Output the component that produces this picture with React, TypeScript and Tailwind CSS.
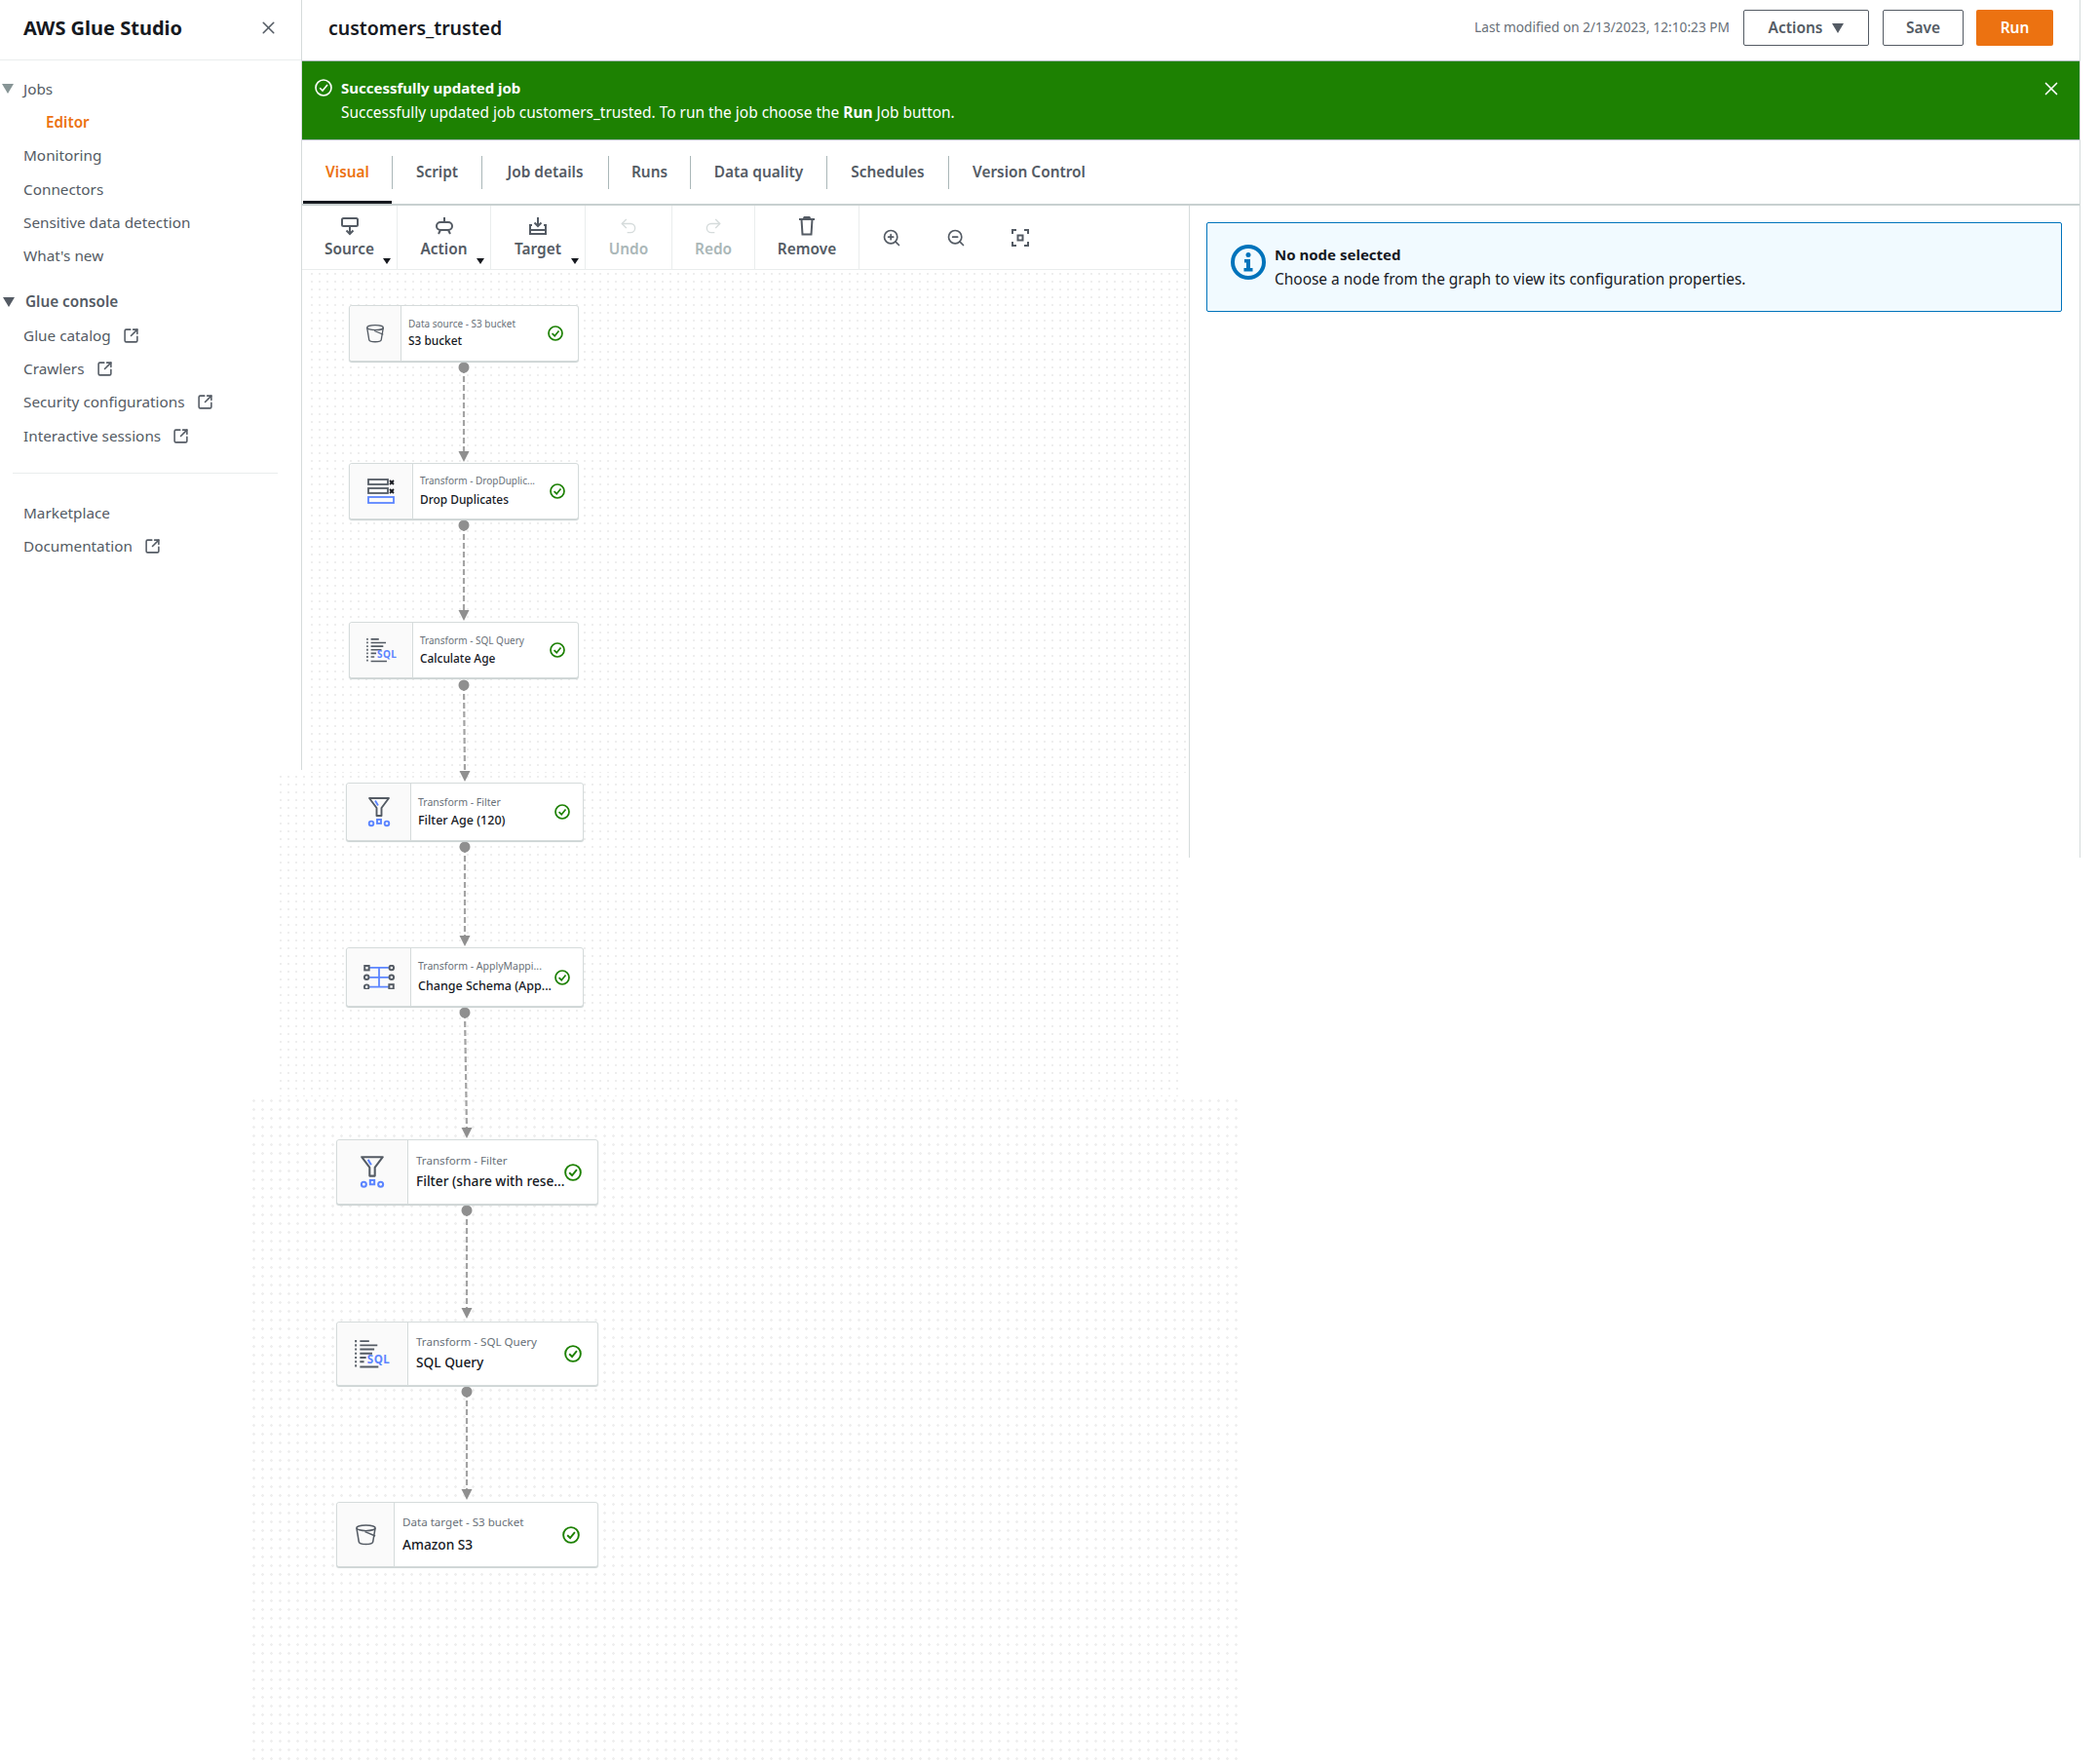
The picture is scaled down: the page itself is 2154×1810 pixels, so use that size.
import React from "react";
import { X, Undo2, Redo2, ZoomIn, ZoomOut, SquareArrowOutUpRight } from "lucide-react";

const PX = 310;
const PY = 277;

function Triangle({ color }: { color: string }) {
  return (
    <svg width="12" height="10" viewBox="0 0 12 10" className="shrink-0">
      <polygon points="0,0 12,0 6,10" fill={color} />
    </svg>
  );
}

function NavItem({ label, ext, active }: { label: string; ext?: boolean; active?: boolean }) {
  return (
    <div className={`flex h-[34.3px] items-center text-[15.3px] ${active ? "pl-[47px] font-semibold text-[#ec7211]" : "pl-[24px] text-[#545b64]"}`}>
      <span>{label}</span>
      {ext && <SquareArrowOutUpRight size={17} strokeWidth={2.2} className="ml-[12px] text-[#545b64]" />}
    </div>
  );
}

function Sidebar() {
  return (
    <aside className="h-[790px] w-[310px] shrink-0 border-r border-[#d5dbdb]">
      <div className="flex h-[62px] items-center justify-between border-b border-[#eaeded] pb-[4px] pl-[24px] pr-[23px]">
        <span className="text-[20px] font-bold text-[#16191f]">AWS Glue Studio</span>
        <X size={21} strokeWidth={1.8} className="text-[#545b64]" />
      </div>
      <div className="pt-[12px]">
        <div className="flex h-[34.3px] items-center gap-[10px] pl-[2px] text-[15.3px] text-[#545b64]">
          <Triangle color="#879596" />
          <span>Jobs</span>
        </div>
        <NavItem label="Editor" active />
        <NavItem label="Monitoring" />
        <NavItem label="Connectors" />
        <NavItem label="Sensitive data detection" />
        <NavItem label="What's new" />
        <div className="mt-[13px] flex h-[34.3px] items-center gap-[11px] pl-[3px] text-[15.3px] font-semibold text-[#545b64]">
          <Triangle color="#545b64" />
          <span>Glue console</span>
        </div>
        <NavItem label="Glue catalog" ext />
        <NavItem label="Crawlers" ext />
        <NavItem label="Security configurations" ext />
        <NavItem label="Interactive sessions" ext />
        <div className="ml-[13px] mr-[24px] mt-[21px] border-t border-[#eaeded]" />
        <div className="mt-[23px]">
          <NavItem label="Marketplace" />
          <NavItem label="Documentation" ext />
        </div>
      </div>
    </aside>
  );
}

function Header() {
  return (
    <header className="flex h-[62px] items-center pb-[5px] pl-[27px] pr-[27px]">
      <h1 className="text-[19.5px] font-semibold text-[#16191f]">customers_trusted</h1>
      <span className="ml-auto text-[13.7px] text-[#687078]">Last modified on 2/13/2023, 12:10:23 PM</span>
      <button className="ml-[14px] flex h-[37px] w-[129px] items-center justify-center gap-[10px] rounded-[2px] border border-[#545b64] text-[15.5px] font-semibold text-[#545b64]">
        Actions
        <svg width="12" height="10" viewBox="0 0 12 10"><polygon points="0,0 12,0 6,10" fill="#545b64" /></svg>
      </button>
      <button className="ml-[14px] h-[37px] w-[83px] rounded-[2px] border border-[#545b64] text-[15.5px] font-semibold text-[#545b64]">Save</button>
      <button className="ml-[13px] h-[37px] w-[79px] rounded-[2px] bg-[#ec7211] text-[15.5px] font-semibold text-white">Run</button>
    </header>
  );
}

function Banner() {
  return (
    <div className="flex h-[82px] items-start border-y border-[#aab7b8] bg-[#1d8102] pl-[13px] pr-[18px] pt-[15px] text-white">
      <svg width="18" height="18" viewBox="0 0 18 18" fill="none" stroke="white" strokeWidth="1.6" className="mt-[3px] shrink-0">
        <circle cx="9" cy="9" r="8" />
        <path d="M5.2 9.2 8 12l5-6" />
      </svg>
      <div className="ml-[9px] flex-1 text-[15.45px] leading-[25px]">
        <div className="text-[15px] font-bold">Successfully updated job</div>
        <div>
          Successfully updated job customers_trusted. To run the job choose the <span className="font-bold">Run</span> Job button.
        </div>
      </div>
      <X size={22} strokeWidth={1.8} className="mt-[2px]" />
    </div>
  );
}

const tabs: [string, string][] = [
  ["Visual", "w-[92px]"],
  ["Script", "w-[92px]"],
  ["Job details", "w-[130px]"],
  ["Runs", "w-[84px]"],
  ["Data quality", "w-[140px]"],
  ["Schedules", "w-[125px]"],
  ["Version Control", "w-[164px]"],
];

function Tabs() {
  return (
    <div className="flex h-[67px] items-stretch border-b-2 border-[#c8d0d0] pl-[1px]">
      {tabs.map(([t, w], i) => (
        <div key={t} className={`${w} relative flex items-center`}>
          <div className={`flex h-[34px] w-full items-center justify-center text-[15.4px] font-semibold ${i === 0 ? "text-[#ec7211]" : "text-[#545b64]"} ${i < tabs.length - 1 ? "border-r border-[#aab7b8]" : ""}`}>
            {t}
          </div>
          {i === 0 && <div className="absolute bottom-0 left-0 right-[1px] h-[3px] bg-[#16191f]" />}
        </div>
      ))}
    </div>
  );
}

const iconProps = { width: 20, height: 20, viewBox: "0 0 20 20", fill: "none", stroke: "#545b64", strokeWidth: 2 };

function SourceIcon() {
  return (
    <svg {...iconProps}>
      <rect x="2" y="2" width="16" height="8" rx="1.500" />
      <path d="M10 10v8M6.500 14.500 10 18l3.500-3.500" />
    </svg>
  );
}
function ActionIcon() {
  return (
    <svg {...iconProps}>
      <rect x="2" y="6" width="16" height="8" rx="4" />
      <path d="M10 1v5M6 14l-2 4M14 14l2 4" />
    </svg>
  );
}
function TargetIcon() {
  return (
    <svg {...iconProps}>
      <path d="M10 1v9M6.500 6.500 10 10l3.500-3.500" />
      <path d="M4 9H2v9h16V9h-2M2 14h16" />
    </svg>
  );
}
function FitIcon() {
  return (
    <svg {...iconProps}>
      <path d="M2 6V2h4M14 2h4v4M18 14v4h-4M6 18H2v-4" />
      <rect x="7.500" y="7.500" width="5" height="5" />
    </svg>
  );
}
function TrashIcon() {
  return (
    <svg {...iconProps}>
      <path d="M2 3h16M6.500 3l1-2h5l1 2M4.500 3l1 15.500h9l1-15.500" />
    </svg>
  );
}

function ToolItem({ label, w, icon, caret, disabled }: { label: string; w: string; icon: React.ReactNode; caret?: boolean; disabled?: boolean }) {
  return (
    <div className={`${w} relative flex flex-col items-center border-r border-[#eaeded] pt-[11px]`}>
      <div className="flex h-[20px] items-center justify-center">{icon}</div>
      <span className={`mt-[2px] text-[15.4px] font-semibold leading-[24px] ${disabled ? "text-[#aab7b8]" : "text-[#545b64]"}`}>{label}</span>
      {caret && (
        <svg width="8" height="6" viewBox="0 0 8 6" className="absolute bottom-[5px] right-[6px]">
          <polygon points="0,0 8,0 4,6" fill="#16191f" />
        </svg>
      )}
    </div>
  );
}

function Toolbar() {
  return (
    <div className="relative z-10 flex h-[66px] shrink-0 border-b border-[#eaeded] bg-white">
      <ToolItem label="Source" w="w-[98px]" icon={<SourceIcon />} caret />
      <ToolItem label="Action" w="w-[96px]" icon={<ActionIcon />} caret />
      <ToolItem label="Target" w="w-[97px]" icon={<TargetIcon />} caret />
      <ToolItem label="Undo" w="w-[89px]" icon={<Undo2 size={20} strokeWidth={1.6} className="text-[#d5dbdb]" />} disabled />
      <ToolItem label="Redo" w="w-[85px]" icon={<Redo2 size={20} strokeWidth={1.6} className="text-[#d5dbdb]" />} disabled />
      <ToolItem label="Remove" w="w-[107px]" icon={<TrashIcon />} />
      {[<ZoomIn key="a" size={20} strokeWidth={2} />, <ZoomOut key="b" size={20} strokeWidth={2} />, <FitIcon key="c" />].map((ic, i) => (
        <div key={i} className="flex h-full w-[66px] items-center justify-center text-[#545b64]">{ic}</div>
      ))}
    </div>
  );
}

function Bucket({ s }: { s: number }) {
  return (
    <svg width={s} height={s} viewBox="0 0 24 24" fill="none" stroke="#545b64" strokeWidth="1.600">
      <ellipse cx="12" cy="5" rx="10" ry="3" />
      <path d="M2 5l2.500 15c.3 1.600 3.500 2.500 7.500 2.500s7.200-.9 7.500-2.500L22 5" />
      <path d="M11 9l11 4.500" />
    </svg>
  );
}

function Dedupe({ s }: { s: number }) {
  return (
    <svg width={s} height={s} viewBox="0 0 28 26" fill="none" strokeWidth="1.800">
      <rect x="1" y="1" width="20" height="5" stroke="#545b64" />
      <rect x="1" y="10" width="20" height="5" stroke="#545b64" />
      <rect x="1" y="19" width="26" height="6" stroke="#5c85ff" />
      <path d="M23 2l4 4M27 2l-4 4M23 11l4 4M27 11l-4 4" stroke="#16191f" />
    </svg>
  );
}

function Sql({ s }: { s: number }) {
  return (
    <svg width={s} height={s * 0.85} viewBox="0 0 34 29" fill="none" stroke="#545b64" strokeWidth="1.800">
      <path d="M1 1v27" strokeDasharray="2 2" />
      <path d="M5 2h9M5 6h17M5 10h14M5 14h12M5 18h6M5 22h4M5 27h18" />
      <text x="12" y="23.500" fontSize="11" fontWeight="700" letterSpacing="0.5" fill="#5c85ff" stroke="none" fontFamily="'Noto Sans', sans-serif">SQL</text>
    </svg>
  );
}

function Funnel({ s }: { s: number }) {
  return (
    <svg width={s} height={s * 1.33} viewBox="0 0 24 32" fill="none" stroke="#545b64" strokeWidth="1.900">
      <path d="M2 2h20l-7.500 10v8h-5v-8z" strokeLinejoin="round" />
      <path d="M8 4.500l3 5" stroke="#5c85ff" />
      <circle cx="4" cy="28" r="2.300" stroke="#5c85ff" />
      <rect x="10" y="24" width="4" height="4" stroke="#5c85ff" />
      <circle cx="20" cy="28" r="2.300" stroke="#5c85ff" />
    </svg>
  );
}

function Mapping({ s }: { s: number }) {
  return (
    <svg width={s} height={s * 0.8} viewBox="0 0 32 26" fill="none" strokeWidth="1.800">
      <path d="M6 3h20M6 13h20M6 23h20M16 3v20" stroke="#5c85ff" />
      <g stroke="#545b64" strokeWidth="2">
        <rect x="1" y="1" width="4.500" height="4.500" />
        <circle cx="29" cy="3" r="2.300" />
        <circle cx="3" cy="13" r="2.300" />
        <circle cx="29" cy="13" r="2.300" />
        <circle cx="3" cy="23" r="2.300" />
        <rect x="26.500" y="20.500" width="4.500" height="4.500" />
      </g>
    </svg>
  );
}

function Check({ s }: { s: number }) {
  return (
    <svg width={s} height={s} viewBox="0 0 16 16" fill="none" stroke="#1d8102" strokeWidth="1.700">
      <circle cx="8" cy="8" r="7" />
      <path d="M4.600 8.200 7.200 10.700 11.500 5.500" />
    </svg>
  );
}

type NodeData = {
  x: number; y: number; w: number; h: number; d: number; tx: number;
  sub: string; title: string; subSize: number; titleSize: number; subY: number; titleY: number;
  cx: number; cs: number; icon: React.ReactNode;
};

const nodes: NodeData[] = [
  { x: 358, y: 313, w: 236, h: 58, d: 53, tx: 7, sub: "Data source - S3 bucket", title: "S3 bucket", subSize: 10, titleSize: 11.9, subY: 19, titleY: 37, cx: 570, cs: 16, icon: <Bucket s={20} /> },
  { x: 358, y: 475, w: 236, h: 58, d: 65, tx: 7, sub: "Transform - DropDuplic...", title: "Drop Duplicates", subSize: 10, titleSize: 11.9, subY: 18, titleY: 38, cx: 572, cs: 16, icon: <Dedupe s={28} /> },
  { x: 358, y: 638, w: 236, h: 58, d: 65, tx: 7, sub: "Transform - SQL Query", title: "Calculate Age", subSize: 10, titleSize: 11.9, subY: 19, titleY: 38, cx: 572, cs: 16, icon: <Sql s={31} /> },
  { x: 355, y: 803, w: 244, h: 60, d: 66, tx: 7, sub: "Transform - Filter", title: "Filter Age (120)", subSize: 10.5, titleSize: 12.5, subY: 20, titleY: 39, cx: 577, cs: 16, icon: <Funnel s={24} /> },
  { x: 355, y: 972, w: 244, h: 61, d: 66, tx: 7, sub: "Transform - ApplyMappi...", title: "Change Schema (App...", subSize: 10.5, titleSize: 12.5, subY: 19, titleY: 40, cx: 577, cs: 16, icon: <Mapping s={32} /> },
  { x: 345, y: 1169, w: 269, h: 67, d: 73, tx: 8, sub: "Transform - Filter", title: "Filter (share with rese...", subSize: 11.6, titleSize: 13.7, subY: 22, titleY: 43, cx: 588, cs: 18, icon: <Funnel s={26} /> },
  { x: 345, y: 1356, w: 269, h: 66, d: 73, tx: 8, sub: "Transform - SQL Query", title: "SQL Query", subSize: 11.6, titleSize: 13.7, subY: 21, titleY: 42, cx: 588, cs: 18, icon: <Sql s={36} /> },
  { x: 345, y: 1541, w: 269, h: 67, d: 59, tx: 8, sub: "Data target - S3 bucket", title: "Amazon S3", subSize: 11.6, titleSize: 13.7, subY: 21, titleY: 44, cx: 586, cs: 18, icon: <Bucket s={23} /> },
];

const edges = [
  { x1: 476, y1: 377, x2: 476, y2: 474 },
  { x1: 476, y1: 539, x2: 476, y2: 637 },
  { x1: 476, y1: 703, x2: 477, y2: 802 },
  { x1: 477, y1: 869, x2: 477, y2: 971 },
  { x1: 477, y1: 1039, x2: 479, y2: 1168 },
  { x1: 479, y1: 1242, x2: 479, y2: 1353 },
  { x1: 479, y1: 1428, x2: 479, y2: 1539 },
];

function GraphNode({ n }: { n: NodeData }) {
  return (
    <div
      className="absolute flex rounded-[3px] border border-[#d5dbdb] bg-white shadow-[0_1px_1px_#c8d0d0]"
      style={{ left: n.x - PX, top: n.y - PY, width: n.w, height: n.h }}
    >
      <div className="flex shrink-0 items-center justify-center rounded-l-[3px] border-r border-[#d5dbdb] bg-[#fafafa]" style={{ width: n.d }}>
        {n.icon}
      </div>
      <div className="absolute whitespace-nowrap leading-none text-[#687078]" style={{ left: n.d + n.tx, top: n.subY - n.subSize * 0.5 - 1, fontSize: n.subSize }}>
        {n.sub}
      </div>
      <div className="absolute whitespace-nowrap font-medium leading-none text-[#16191f]" style={{ left: n.d + n.tx, top: n.titleY - n.titleSize * 0.5 - 1, fontSize: n.titleSize }}>
        {n.title}
      </div>
      <div className="absolute flex items-center" style={{ left: n.cx - n.x - n.cs / 2 - 1, top: (n.h - n.cs) / 2 - 1 }}>
        <Check s={n.cs} />
      </div>
    </div>
  );
}

function Graph() {
  return (
    <div className="relative flex-1">
      <div className="absolute left-[6px] top-0 h-[516px] w-[903px] bg-[radial-gradient(circle,#eeeeee_1.200px,transparent_1.500px)] bg-[length:8px_8px]" />
      <div className="absolute left-[-26px] top-[516px] h-[332px] w-[930px] bg-[radial-gradient(circle,#eeeeee_1.200px,transparent_1.500px)] bg-[length:8px_8px]" />
      <div className="absolute left-[-54px] top-[848px] h-[685px] w-[1014px] bg-[radial-gradient(circle,#eeeeee_1.200px,transparent_1.500px)] bg-[length:9px_9px]" />
      <svg className="absolute left-0 top-0" width={400} height={1533} fill="none">
        {edges.map((e, i) => (
          <g key={i} transform={`translate(${-PX} ${-PY})`}>
            <line x1={e.x1} y1={e.y1} x2={e.x2} y2={e.y2 - 8} stroke="#a3a3a3" strokeWidth="2.200" strokeDasharray="6 3" />
            <circle cx={e.x1} cy={e.y1} r="5.500" fill="#8f8f8f" />
            <polygon points={`${e.x2 - 5.500},${e.y2 - 11} ${e.x2 + 5.500},${e.y2 - 11} ${e.x2},${e.y2}`} fill="#8f8f8f" />
          </g>
        ))}
      </svg>
      {nodes.map((n) => (
        <GraphNode key={n.title} n={n} />
      ))}
    </div>
  );
}

function InfoPanel() {
  return (
    <div className="flex-1 pl-[17px] pr-[18px] pt-[17px]">
      <div className="flex h-[92px] items-start rounded-[2px] border border-[#0073bb] bg-[#f1faff] pl-[24px] pt-[20px]">
        <svg width="36" height="36" viewBox="0 0 36 36" fill="none" className="mt-[2px] shrink-0">
          <circle cx="18" cy="18" r="16" stroke="#0073bb" strokeWidth="4" />
          <circle cx="18" cy="10.500" r="2.500" fill="#0073bb" />
          <path d="M14 15h6v9h2.500v3.500h-9V24H16v-5.500h-2z" fill="#0073bb" />
        </svg>
        <div className="ml-[9px] text-[15.45px] leading-[25px]">
          <div className="text-[15px] font-bold text-[#16191f]">No node selected</div>
          <div className="text-[#16191f]">Choose a node from the graph to view its configuration properties.</div>
        </div>
      </div>
    </div>
  );
}

export default function App() {
  return (
    <div className="relative flex h-[1810px] w-full overflow-hidden bg-white font-['Noto_Sans',sans-serif]">
      <Sidebar />
      <main className="flex h-[880px] w-[1825px] shrink-0 flex-col border-r border-[#d5dbdb]">
        <Header />
        <Banner />
        <Tabs />
        <div className="flex flex-1">
          <div className="flex w-[911px] shrink-0 flex-col border-r border-[#d5dbdb]">
            <Toolbar />
            <Graph />
          </div>
          <InfoPanel />
        </div>
      </main>
    </div>
  );
}
